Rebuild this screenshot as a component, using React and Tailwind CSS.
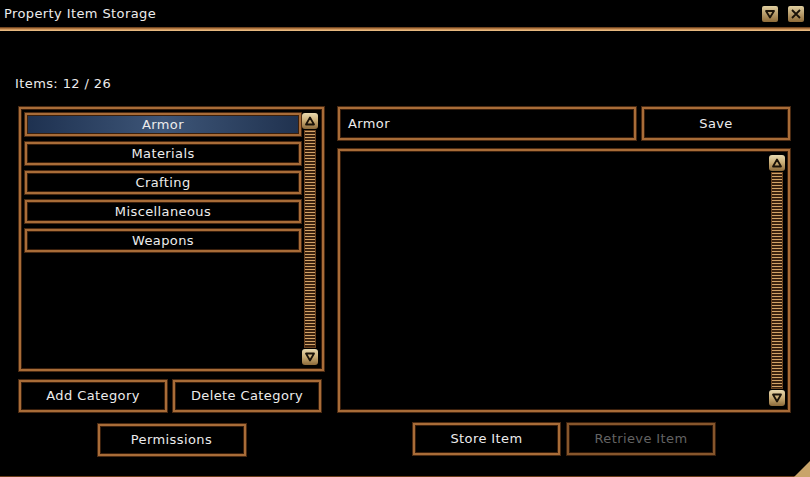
import React from "react";

const categories = ["Armor", "Materials", "Crafting", "Miscellaneous", "Weapons"];

// bronze frame used by buttons, fields and panels
const frame =
  "border-2 border-[#a86c38] shadow-[inset_0_0_0_1px_#3a1f0c,0_0_0_1px_#4a2a12]";

function ArrowButton({ dir }) {
  return (
    <div className="w-[16px] h-[16px] rounded-[3px] bg-gradient-to-b from-[#e8d9b0] via-[#c8ab74] to-[#8c6a3a] flex items-center justify-center shrink-0">
      <svg width="12" height="12" viewBox="0 0 12 12">
        {dir === "up" ? (
          <path d="M2 9.5 L6 2.5 L10 9.5 Z" fill="none" stroke="#1a1208" strokeWidth="1.8" strokeLinejoin="round" />
        ) : (
          <path d="M2 2.5 L10 2.5 L6 9.5 Z" fill="none" stroke="#1a1208" strokeWidth="1.8" strokeLinejoin="round" />
        )}
      </svg>
    </div>
  );
}

function ScrollBar() {
  return (
    <div className="w-[16px] h-full flex flex-col items-center">
      <ArrowButton dir="up" />
      <div className="flex-1 w-[12px] my-[1px] border border-[#6b4320] bg-[repeating-linear-gradient(to_bottom,#d4a468_0px,#d4a468_1px,#3a220f_1px,#3a220f_3px)]" />
      <ArrowButton dir="down" />
    </div>
  );
}

function Button({ children, disabled, className = "" }) {
  return (
    <div
      className={`h-[32px] flex items-center justify-center ${frame} ${
        disabled ? "text-[#7c7c7c] opacity-80" : "text-[#ececec]"
      } ${className}`}
    >
      {children}
    </div>
  );
}

export default function App() {
  return (
    <div
      className="w-[810px] h-[477px] bg-black text-[#ececec] text-[13px] tracking-[0.4px] flex flex-col relative overflow-hidden"
      style={{ fontFamily: "'DejaVu Sans', sans-serif" }}
    >
      {/* title bar */}
      <div className="h-[27px] flex items-center justify-between pl-[4px] pr-[6px]">
        <span className="text-[13px]">Property Item Storage</span>
        <div className="flex gap-[10px]">
          <div className="w-[16px] h-[16px] rounded-[2px] bg-gradient-to-b from-[#e0cfa0] to-[#8f6b38] flex items-center justify-center">
            <svg width="12" height="12" viewBox="0 0 12 12">
              <path d="M2 3 L10 3 L6 9.5 Z" fill="none" stroke="#1a1208" strokeWidth="1.8" strokeLinejoin="round" />
            </svg>
          </div>
          <div className="w-[16px] h-[16px] rounded-[2px] bg-gradient-to-b from-[#e0cfa0] to-[#8f6b38] flex items-center justify-center">
            <svg width="12" height="12" viewBox="0 0 12 12">
              <path d="M2 2 L10 10 M10 2 L2 10" stroke="#1a1208" strokeWidth="1.8" />
            </svg>
          </div>
        </div>
      </div>
      <div className="h-[4px] bg-gradient-to-b from-[#5a3214] via-[#c98b4e] to-[#f0c890]" />

      <div className="pl-[15px] mt-[45px] h-[16px] text-[13px] leading-[16px]">Items: 12 / 26</div>

      <div className="flex gap-[14px] pl-[19px] mt-[15px]">
        {/* left column */}
        <div className="w-[305px] flex flex-col">
          <div className={`h-[264px] flex gap-[1px] pl-[4px] pr-[4px] py-[4px] ${frame}`}>
            <div className="flex-1 flex flex-col gap-[6px]">
              {categories.map((c, i) => (
                <div
                  key={c}
                  className={`h-[23px] flex items-center justify-center ${frame} ${
                    i === 0
                      ? "bg-gradient-to-r from-[#1e3150] via-[#3e5678] to-[#20324f]"
                      : "bg-black"
                  }`}
                >
                  {c}
                </div>
              ))}
            </div>
            <ScrollBar />
          </div>
          <div className="flex gap-[6px] mt-[9px]">
            <Button className="w-[148px] h-[31px]">Add Category</Button>
            <Button className="w-[148px] h-[31px]">Delete Category</Button>
          </div>
          <div className="flex justify-center mt-[12px]">
            <Button className="w-[148px]">Permissions</Button>
          </div>
        </div>

        {/* right column */}
        <div className="w-[452px] flex flex-col">
          <div className="flex gap-[6px]">
            <div className={`flex-1 h-[33px] flex items-center pl-[8px] ${frame}`}>Armor</div>
            <Button className="w-[148px] h-[33px]">Save</Button>
          </div>
          <div className={`h-[263px] mt-[9px] flex justify-end pr-[3px] py-[4px] ${frame}`}>
            <ScrollBar />
          </div>
          <div className="flex justify-center gap-[7px] mt-[11px]">
            <Button className="w-[147px]">Store Item</Button>
            <Button className="w-[148px]" disabled>
              Retrieve Item
            </Button>
          </div>
        </div>
      </div>

      {/* bottom edge and resize grip */}
      <div className="absolute left-0 right-0 bottom-0 h-[1px] bg-[#6b3e1a]" />
      <svg className="absolute right-0 bottom-0" width="16" height="16" viewBox="0 0 16 16">
        <path d="M16 0 L16 16 L0 16 Z" fill="#c9a46a" />
      </svg>
    </div>
  );
}
